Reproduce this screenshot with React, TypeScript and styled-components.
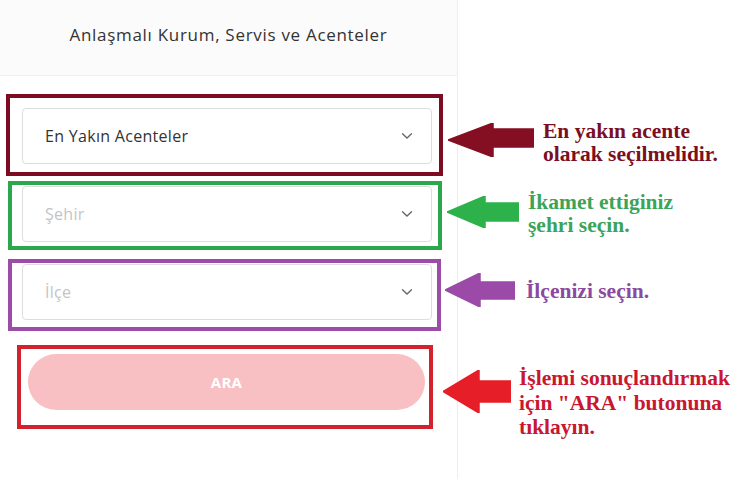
import React from "react";
import styled, { createGlobalStyle } from "styled-components";

const GlobalStyle = createGlobalStyle`
  html, body {
    margin: 0;
    padding: 0;
    background: #ffffff;
  }
  body {
    font-family: "Open Sans", "Liberation Sans", sans-serif;
  }
`;

const Page = styled.div`
  position: relative;
  width: 756px;
  height: 479px;
  overflow: hidden;
  background: #ffffff;
`;

const Panel = styled.div`
  width: 458px;
  height: 100%;
  border-right: 1px solid #efefef;
  box-sizing: border-box;
  display: flex;
  flex-direction: column;
`;

const Header = styled.div`
  height: 76px;
  background: #fbfbfb;
  border-bottom: 1px solid #f1f1f1;
  display: flex;
  align-items: center;
  justify-content: center;
  padding-bottom: 6px;
  box-sizing: border-box;
`;

const Title = styled.h1`
  margin: 0;
  font-size: 17px;
  font-weight: 400;
  color: #333333;
  letter-spacing: 0.7px;
`;

const Form = styled.div`
  display: flex;
  flex-direction: column;
  padding-top: 18px;
`;

const Frame = styled.div<{
  $color: string;
  $left: number;
  $width: number;
  $pad: string;
  $gap?: number;
}>`
  box-sizing: border-box;
  margin-left: ${(p) => p.$left}px;
  margin-top: ${(p) => p.$gap ?? 0}px;
  width: ${(p) => p.$width}px;
  border: 4px solid ${(p) => p.$color};
  padding: ${(p) => p.$pad};
`;

const Select = styled.div<{ $placeholder?: boolean }>`
  box-sizing: border-box;
  height: 56px;
  border: 1px solid #dddddd;
  border-radius: 4px;
  background: #ffffff;
  display: flex;
  align-items: center;
  justify-content: space-between;
  padding: 0 18px 0 22px;
  font-size: 16px;
  letter-spacing: 0.3px;
  color: ${(p) => (p.$placeholder ? "#c4c4c4" : "#333333")};
`;

const Chevron = styled.svg`
  width: 12px;
  height: 8px;
  display: block;
`;

const SearchButton = styled.button`
  width: 100%;
  height: 56px;
  border: none;
  border-radius: 28px;
  background: #f9c0c3;
  color: #ffffff;
  font-family: "Open Sans", "Liberation Sans", sans-serif;
  font-weight: 700;
  font-size: 15px;
  letter-spacing: 0.3px;
  cursor: default;
`;

const Callout = styled.div<{ $left: number; $top: number; $gap: number }>`
  position: absolute;
  left: ${(p) => p.$left}px;
  top: ${(p) => p.$top}px;
  display: flex;
  align-items: flex-start;
  gap: ${(p) => p.$gap}px;
`;

const Note = styled.div<{ $color: string; $offset: number; $line: number }>`
  margin-top: ${(p) => p.$offset}px;
  font-family: "Liberation Serif", "Times New Roman", serif;
  font-weight: 700;
  font-size: 21.5px;
  line-height: ${(p) => p.$line}px;
  color: ${(p) => p.$color};
  white-space: nowrap;
`;

const ChevronIcon = () => (
  <Chevron viewBox="0 0 12 8">
    <path d="M1.5 1.8 L6 6 L10.5 1.8" fill="none" stroke="#666" strokeWidth="1.3" strokeLinecap="round" />
  </Chevron>
);

type ArrowProps = {
  color: string;
  w: number;
  h: number;
  head: number;
  shaftTop: number;
  shaftBottom: number;
};

const Arrow = ({ color, w, h, head, shaftTop, shaftBottom }: ArrowProps) => (
  <svg width={w} height={h} viewBox={`0 0 ${w} ${h}`} style={{ flexShrink: 0 }}>
    <polygon
      points={`0,${h / 2} ${head},0 ${head},${shaftTop} ${w},${shaftTop} ${w},${shaftBottom} ${head},${shaftBottom} ${head},${h}`}
      fill={color}
      stroke={color}
      strokeWidth="1.5"
      strokeLinejoin="round"
    />
  </svg>
);

export default function App() {
  return (
    <Page>
      <GlobalStyle />
      <Panel>
        <Header>
          <Title>Anlaşmalı Kurum, Servis ve Acenteler</Title>
        </Header>
        <Form>
          <Frame $color="#7d0c22" $left={6} $width={437} $pad="10px 7px 8px 12px">
            <Select>
              <span>En Yakın Acenteler</span>
              <ChevronIcon />
            </Select>
          </Frame>
          <Frame $color="#2ba84b" $left={8} $width={434} $gap={5} $pad="1px 6px 4px 10px">
            <Select $placeholder>
              <span>Şehir</span>
              <ChevronIcon />
            </Select>
          </Frame>
          <Frame $color="#9a4ca6" $left={8} $width={433} $gap={9} $pad="1px 5px 7px 10px">
            <Select $placeholder>
              <span>İlçe</span>
              <ChevronIcon />
            </Select>
          </Frame>
          <Frame $color="#d2222d" $left={17} $width={416} $gap={14} $pad="5px 4px 15px 7px">
            <SearchButton>ARA</SearchButton>
          </Frame>
        </Form>
      </Panel>

      <Callout $left={448} $top={123} $gap={9}>
        <Arrow color="#840f23" w={86} h={34} head={45} shaftTop={6} shaftBottom={24} />
        <Note $color="#7b0f22" $offset={-3} $line={23}>
          En yakın acente
          <br />
          olarak seçilmelidir.
        </Note>
      </Callout>

      <Callout $left={447} $top={196} $gap={9}>
        <Arrow color="#2db24b" w={72} h={32} head={38} shaftTop={7} shaftBottom={25} />
        <Note $color="#3aa458" $offset={-5} $line={23}>
          İkamet ettiginiz
          <br />
          şehri seçin.
        </Note>
      </Callout>

      <Callout $left={445} $top={273} $gap={11}>
        <Arrow color="#9b4aa8" w={70} h={34} head={35} shaftTop={9} shaftBottom={26} />
        <Note $color="#8b4a9e" $offset={7} $line={23}>
          İlçenizi seçin.
        </Note>
      </Callout>

      <Callout $left={443} $top={370} $gap={8}>
        <Arrow color="#e61e27" w={68} h={43} head={36} shaftTop={11} shaftBottom={32} />
        <Note $color="#c8172f" $offset={-4} $line={24.5}>
          İşlemi sonuçlandırmak
          <br />
          için "ARA" butonuna
          <br />
          tıklayın.
        </Note>
      </Callout>
    </Page>
  );
}
